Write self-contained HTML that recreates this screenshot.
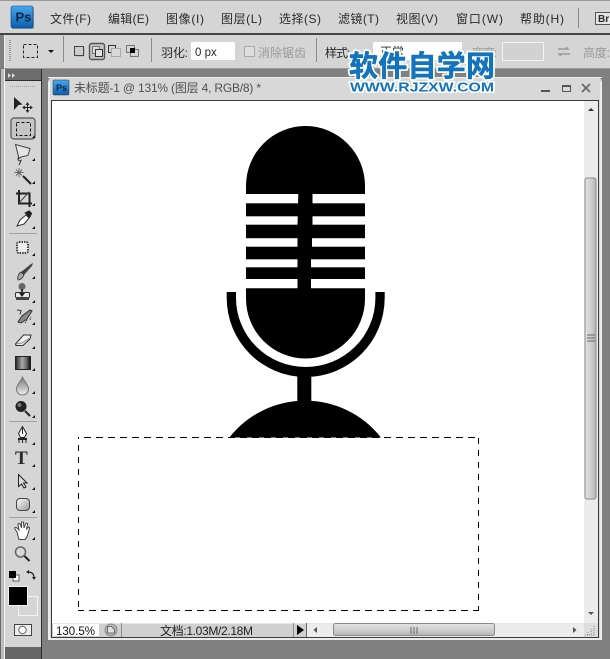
<!DOCTYPE html>
<html><head><meta charset="utf-8"><style>
html,body{margin:0;padding:0;width:610px;height:659px;overflow:hidden;background:#999}
svg{display:block;filter:blur(.3px)}
text{font-family:"Liberation Sans","Noto Sans CJK SC",sans-serif;font-size:12px;fill:#2a2a2a}
.g{fill:#9a9a9a}
.wm{font-family:"Noto Sans CJK SC",sans-serif;font-weight:700;fill:#1474bb;stroke:#fff;paint-order:stroke;stroke-linejoin:round}
.wm2{font-family:"Noto Sans CJK SC",sans-serif;font-weight:700;fill:#1474bb;stroke:#1474bb;stroke-linejoin:round}
</style></head><body>
<svg width="610" height="659" viewBox="0 0 610 659" xmlns="http://www.w3.org/2000/svg">
<defs>
<linearGradient id="ps" x1="0" y1="0" x2="0" y2="1"><stop offset="0" stop-color="#45a8ee"/><stop offset="1" stop-color="#0a5db0"/></linearGradient>
<linearGradient id="grd" x1="0" y1="0" x2="1" y2="0"><stop offset="0" stop-color="#222"/><stop offset=".45" stop-color="#aaa"/><stop offset=".75" stop-color="#666"/><stop offset="1" stop-color="#000"/></linearGradient>
<linearGradient id="shp" x1="0" y1="0" x2="1" y2="1"><stop offset="0" stop-color="#fff"/><stop offset="1" stop-color="#999"/></linearGradient>
<linearGradient id="drop" x1="0" y1="0" x2="0" y2="1"><stop offset="0" stop-color="#777"/><stop offset="1" stop-color="#eee"/></linearGradient>
<linearGradient id="ht" x1="0" y1="0" x2="0" y2="1"><stop offset="0" stop-color="#e2e2e2"/><stop offset=".5" stop-color="#d0d0d0"/><stop offset="1" stop-color="#b4b4b4"/></linearGradient>
<linearGradient id="vt" x1="0" y1="0" x2="1" y2="0"><stop offset="0" stop-color="#e2e2e2"/><stop offset=".5" stop-color="#d0d0d0"/><stop offset="1" stop-color="#b4b4b4"/></linearGradient>
</defs>

<!-- workspace -->
<rect width="610" height="659" fill="#808080"/>

<!-- menu bar -->
<rect width="610" height="33" fill="#d5d5d5"/>
<rect y="0" width="610" height="1" fill="#999"/>
<rect y="33" width="610" height="2" fill="#444"/>
<rect x="12" y="7" width="22" height="22" fill="#9c9c9c"/>
<rect x="11" y="6" width="22" height="22" rx="2" fill="url(#ps)" stroke="#0b3f78" stroke-width=".6"/>
<text x="15.500" y="21.500" style="font-size:13px;font-weight:700;fill:#10243c">Ps</text>
<text x="50" y="23" textLength="41">文件(F)</text>
<text x="108" y="23" textLength="41">编辑(E)</text>
<text x="166" y="23" textLength="38">图像(I)</text>
<text x="221" y="23" textLength="41">图层(L)</text>
<text x="279" y="23" textLength="42">选择(S)</text>
<text x="338" y="23" textLength="41">滤镜(T)</text>
<text x="396" y="23" textLength="42">视图(V)</text>
<text x="456" y="23" textLength="47">窗口(W)</text>
<text x="520" y="23" textLength="44">帮助(H)</text>
<rect x="578" y="8" width="1" height="20" fill="#8a8a8a"/>
<rect x="595.500" y="12.500" width="20" height="12" fill="#e4e4e4" stroke="#555"/>
<text x="598" y="22" style="font-size:10px;font-weight:700">Br</text>

<!-- options bar -->
<rect x="4" y="35" width="606" height="34" fill="#d5d5d5"/>
<rect x="4" y="35" width="1" height="34" fill="#f0f0f0"/>
<rect x="4" y="68" width="606" height="1" fill="#9a9a9a"/>
<path d="M10 40V62" stroke="#999" stroke-width="2" stroke-dasharray="1 1"/>
<rect x="23.500" y="44.500" width="14" height="13" fill="none" stroke="#222" stroke-dasharray="3 2"/>
<path d="M48 50h6l-3 3z" fill="#111"/>
<rect x="63" y="36" width="1" height="26" fill="#8c8c8c"/>
<rect x="75.500" y="47.500" width="9" height="9" fill="#aaa"/>
<rect x="74.500" y="46.500" width="9" height="9" fill="#ccc" stroke="#444"/>
<rect x="89.500" y="43.500" width="15" height="16" rx="2" fill="#c4c4c4" stroke="#555" stroke-width="1.400"/>
<rect x="92.500" y="46.500" width="7" height="7" fill="#ddd" stroke="#777"/>
<rect x="95.500" y="49.500" width="7" height="7" fill="#e0e0e0" stroke="#333"/>
<rect x="108.500" y="45.500" width="7" height="7" fill="#d5d5d5" stroke="#333"/>
<rect x="111.500" y="48.500" width="9" height="8" fill="#d8d8d8" stroke="#aaa"/>
<rect x="126.500" y="45.500" width="8" height="7" fill="#d5d5d5" stroke="#777"/>
<rect x="130.500" y="49.500" width="8" height="7" fill="#d5d5d5" stroke="#777"/>
<rect x="130" y="48" width="5" height="5" fill="#000"/>
<rect x="151" y="38" width="1" height="24" fill="#8c8c8c"/>
<text x="161" y="57" textLength="27">羽化:</text>
<rect x="191" y="42" width="44" height="18" rx="1" fill="#fff"/>
<text x="195" y="56" style="font-size:11.500px">0 px</text>
<rect x="244.500" y="46.500" width="10" height="10" fill="#dedede" stroke="#aaa"/>
<text class="g" x="258" y="57" textLength="48">消除锯齿</text>
<rect x="316" y="38" width="1" height="24" fill="#8c8c8c"/>
<text x="325" y="57" textLength="25">样式:</text>
<rect x="373" y="42" width="89" height="18" rx="1" fill="#fff"/>
<text x="380" y="56">正常</text>
<path d="M452 53h6l-3 4z" fill="#111"/>
<text class="g" x="472" y="57" textLength="25">宽度:</text>
<rect x="502.500" y="42.500" width="41" height="18" rx="1" fill="#d2d2d2" stroke="#f4f4f4"/>
<path d="M558 49h10l-2-2M570 54h-11l2 2" fill="none" stroke="#999" stroke-width="1.400"/>
<text class="g" x="583" y="57" textLength="27">高度:</text>

<!-- left edge + toolbar -->
<rect x="0" y="69" width="1" height="590" fill="#6a6a6a"/>
<rect x="1" y="69" width="3" height="590" fill="#bdbdbd"/>
<rect x="4" y="69" width="1" height="590" fill="#f2f2f2"/>
<rect x="5" y="69" width="36" height="11" fill="#6c6c6c"/>
<path d="M8 73l3 2.500-3 2.500zM12 73l3 2.500-3 2.500z" fill="#ddd"/>
<rect x="5" y="80" width="36" height="1" fill="#2e2e2e"/>
<rect x="5" y="81" width="36" height="566" fill="#d5d5d5"/>
<rect x="5" y="647" width="36" height="12" fill="#666"/>
<rect x="41" y="69" width="1" height="590" fill="#2e2e2e"/>
<path d="M10 86.500H36" stroke="#a0a0a0" stroke-dasharray="1 1"/>

<!-- move -->
<path d="M14 97l8.500 7.500-4 .5-4.500 5z" fill="#222"/>
<path d="M27.500 103.500v8M23.500 107.500h8M26 105l1.500-2 1.500 2M26 110l1.500 2 1.500-2M25 106l-2 1.500 2 1.500M30 106l2 1.500-2 1.500" fill="none" stroke="#222"/>
<!-- marquee -->
<rect x="11" y="118" width="24" height="21" rx="3" fill="#c6c6c6" stroke="#555" stroke-width="1.200"/>
<rect x="16.500" y="122.500" width="14" height="13" fill="none" stroke="#111" stroke-dasharray="3 2"/>
<!-- lasso -->
<path d="M15.500 144.500l14.500 4-2 7-7 1.500-2 1.500z" fill="#e4e4e4" stroke="#444"/>
<path d="M19 157a2 2 0 1 0 2 3.500l-2 4.500" fill="none" stroke="#333"/>
<!-- wand -->
<path d="M19 168v9M14.500 172.500h9M16 169.500l6 6M22 169.500l-6 6" stroke="#666" stroke-width=".9"/>
<path d="M23 176l8 8" stroke="#222" stroke-width="2"/>
<!-- crop -->
<path d="M19 190V203.500H32M16 193.500H29.500V207" fill="none" stroke="#222" stroke-width="2"/>
<path d="M19 203l10-11" stroke="#444"/>
<!-- dropper -->
<path d="M17 226l3-6 6-5 3 3-5 6z" fill="#fff" stroke="#333"/>
<path d="M26 213l3-1.500 2 2-1.500 3z" fill="#222" stroke="#222" stroke-width="2"/>
<rect x="9" y="233" width="28" height="1" fill="#a2a2a2"/>
<!-- heal -->
<rect x="17" y="242" width="11" height="11" rx="2" fill="#eee" stroke="#444" stroke-width="2" stroke-dasharray="1.500 1"/>
<!-- brush -->
<path d="M21 272l10-8 2-1-1 3-8 9z" fill="#444"/>
<path d="M18 280c-1-3 1-7 3-8l3 3c-1 3-4 5-6 5z" fill="#aaa" stroke="#333" stroke-width=".8"/>
<!-- stamp -->
<circle cx="22" cy="286.500" r="3.500" fill="#666"/>
<path d="M21 289h2v3h-2z" fill="#333"/>
<rect x="15.500" y="292.500" width="14" height="5" rx="1" fill="#e8e8e8" stroke="#333"/>
<rect x="16" y="297" width="13" height="3" fill="#444"/>
<path d="M19 293h6l-3 4z" fill="#222"/>
<!-- history -->
<path d="M18 322l4-6 8-6 2 1-5 8-6 4z" fill="#888" stroke="#333"/>
<path d="M25 323l2-3M30 320l1-3" stroke="#333" stroke-dasharray="1.500 1"/>
<path d="M17 310l4 .5-1 4" fill="none" stroke="#333"/>
<!-- eraser -->
<path d="M15.500 344l8-9H31l-1 4-7 6.500H16z" fill="#f0f0f0" stroke="#333"/>
<path d="M16 344l6-1 8-5" fill="none" stroke="#888"/>
<!-- gradient -->
<rect x="15.500" y="356.500" width="15" height="13" fill="url(#grd)" stroke="#222"/>
<!-- blur -->
<path d="M22.500 377c2 5 6 8 6 12a6 6 0 0 1-12 0c0-4 4-7 6-12z" fill="url(#drop)" stroke="#777"/>
<!-- dodge -->
<circle cx="21" cy="406.500" r="5.500" fill="#222"/>
<circle cx="19.500" cy="405" r="2" fill="#777"/>
<path d="M25 411l5 5" stroke="#222" stroke-width="2"/>
<rect x="9" y="421" width="28" height="1" fill="#a2a2a2"/>
<!-- pen -->
<path d="M22.500 426.500l4 7-2 4h-4l-2-4z" fill="#fff" stroke="#222"/>
<path d="M22.500 428v6" stroke="#222"/>
<rect x="18" y="438" width="9" height="2" fill="#222"/>
<path d="M19 440v3M22.500 440v3M26 440v3" stroke="#222"/>
<!-- T -->
<text x="15" y="464" style="font-family:'Liberation Serif',serif;font-size:19px;font-weight:700;fill:#2a2a2a">T</text>
<!-- path select -->
<path d="M18.500 474.500v12l3-2.500 2.500 4 2-1-2.500-4h3.500z" fill="#ddd" stroke="#222"/>
<!-- shape -->
<rect x="16.500" y="498.500" width="13" height="12" rx="3.500" fill="url(#shp)" stroke="#444"/>
<rect x="9" y="517" width="28" height="1" fill="#a2a2a2"/>
<!-- hand -->
<path d="M17 532l-2-3c-1-2 1-2 2-1l2 2-1-5c0-2 2-2 2.500 0l1 3v-5c0-1.500 2-1.500 2 0l.5 5 1.500-4c.8-1.500 2.200-1 2 .5l-1 5 1.500-2c1-1 2 0 1.500 1l-1.500 5c-.5 3-2 5-3 6h-6z" fill="#fff" stroke="#444"/>
<!-- zoom -->
<circle cx="20.500" cy="552" r="5" fill="#d8d8d8" stroke="#666" stroke-width="1.500"/>
<path d="M24.500 556l5 5" stroke="#222" stroke-width="2"/>
<!-- default colors -->
<rect x="13" y="575" width="6" height="6" fill="#fff" stroke="#222" stroke-width=".7"/>
<rect x="9" y="571" width="7" height="7" fill="#000"/>
<path d="M28 572c4 0 6 2 6 6" fill="none" stroke="#222" stroke-width="1.200"/>
<path d="M26 572l3-2v4zM34 580l-2-3h4z" fill="#222"/>
<!-- fg / bg -->
<rect x="18.500" y="596.500" width="19" height="19" fill="#d5d5d5" stroke="#f2f2f2"/>
<rect x="8.500" y="586.500" width="19" height="19" fill="#000" stroke="#f2f2f2"/>
<!-- quick mask -->
<rect x="14.500" y="624.500" width="17" height="11" fill="#eee" stroke="#444"/>
<circle cx="22.500" cy="630" r="3.700" fill="#fff" stroke="#666"/>
<!-- tool corner flags -->
<path fill="#111" d="M35 135v3h-3zM35 158v3h-3zM35 181v3h-3zM35 203v3h-3zM35 226v3h-3zM35 253v3h-3zM35 276v3h-3zM35 300v3h-3zM35 322v3h-3zM35 346v3h-3zM35 368v3h-3zM35 391v3h-3zM35 415v3h-3zM35 442v3h-3zM35 464v3h-3zM35 487v3h-3zM35 510v3h-3zM35 537v3h-3z"/>

<!-- document window -->
<path d="M48 640V82a5 5 0 0 1 5-5H597a5 5 0 0 1 5 5V640z" fill="#d8d8d8"/>
<rect x="48" y="77" width="554" height="1" fill="#efefef"/>
<rect x="48" y="638" width="554" height="2" fill="#ececec"/>
<rect x="600" y="82" width="2" height="558" fill="#ececec"/>
<rect x="48" y="82" width="2" height="558" fill="#ececec"/>
<rect x="53" y="80" width="16" height="15" rx="1" fill="url(#ps)" stroke="#333" stroke-width=".5"/>
<text x="56" y="91" style="font-size:9px;font-weight:700;fill:#10243c">Ps</text>
<text x="74" y="92" textLength="187" style="fill:#505050">未标题-1 @ 131% (图层 4, RGB/8) *</text>
<rect x="541" y="90" width="9" height="2" fill="#555"/>
<rect x="562.500" y="85.500" width="8" height="6" fill="none" stroke="#555"/>
<rect x="562" y="85" width="9" height="2" fill="#555"/>
<path d="M582 84l8 8M590 84l-8 8" stroke="#666" stroke-width="1.600"/>
<!-- inner frame -->
<rect x="51.500" y="100.500" width="547" height="537" fill="#fff" stroke="#3a3a3a"/>

<!-- microphone -->
<g fill="#000">
<path d="M246 194V186a59.500 60 0 0 1 119 0V194z"/>
<path d="M298.300 193H312.500V225H312V259H311V289H297.500V225H297.500z"/>
<rect x="246" y="203.300" width="119" height="13"/>
<rect x="246" y="224.700" width="119" height="13.500"/>
<rect x="246" y="246.700" width="119" height="12.600"/>
<rect x="246" y="267.300" width="119" height="11.700"/>
<path d="M246 288.300H365V298.500a59.500 60 0 0 1-119 0z"/>
<path d="M226.700 292H236V298a69.700 69 0 0 0 139.400 0V292H384.700V298a79 79 0 0 1-158 0z"/>
<rect x="297.300" y="374" width="14" height="30"/>
<path d="M229.300 437.500A96.500 96.500 0 0 1 381 437.500z"/>
</g>
<!-- marquee selection -->
<g fill="none" stroke="#000">
<path d="M78 437.500H479" stroke-dasharray="7 5" stroke-dashoffset="6"/>
<path d="M78 610.500H479" stroke-dasharray="7 5" stroke-dashoffset="1"/>
<path d="M78.500 437V611" stroke-dasharray="6 6" stroke-dashoffset="4"/>
<path d="M478.500 437V611" stroke-dasharray="6 6" stroke-dashoffset="11"/>
</g>

<!-- v scrollbar -->
<rect x="584" y="101" width="14" height="522" fill="#ececec"/>
<path d="M588 111l3-3 3 3z" fill="#333"/>
<rect x="585" y="178" width="11" height="321" rx="2" fill="url(#vt)" stroke="#8c8c8c"/>
<path d="M587 335h8M587 338h8M587 341h8" stroke="#666"/>
<path d="M588 612h6l-3 3z" fill="#555"/>

<!-- status bar -->
<rect x="52" y="623" width="256" height="14" fill="#d0d0d0"/>
<rect x="52" y="623" width="546" height="1" fill="#e6e6e6"/>
<rect x="53" y="624" width="46" height="12" fill="#fff"/>
<text x="56" y="635" textLength="39" style="fill:#111;font-size:11.500px">130.5%</text>
<circle cx="111" cy="630" r="6" fill="#b4b4b4" stroke="#8c8c8c"/>
<path d="M107.500 626.500h4l3 3v3.500h-7z" fill="#ddd" stroke="#555" stroke-width=".8"/>
<rect x="121" y="623" width="1" height="14" fill="#8c8c8c"/>
<text x="160" y="635" textLength="93" style="fill:#222">文档:1.03M/2.18M</text>
<rect x="293" y="623" width="1" height="14" fill="#8c8c8c"/>
<path d="M297 625l7 5-7 5z" fill="#000"/>
<rect x="306" y="623" width="1" height="14" fill="#666"/>
<!-- h scrollbar -->
<rect x="307" y="624" width="291" height="13" fill="#ececec"/>
<path d="M317 627l-3.500 3 3.500 3z" fill="#555"/>
<rect x="333.500" y="623.500" width="161" height="12" rx="2" fill="url(#ht)" stroke="#8c8c8c"/>
<path d="M411 627v7M414 627v7M417 627v7" stroke="#666"/>
<path d="M573 627l3.500 3-3.500 3z" fill="#555"/>
<rect x="584" y="623" width="14" height="14" fill="#dedede"/>
<path d="M594 626v9M591 629v6M588 632v3M585 635h10" stroke="#888" stroke-dasharray="1 1"/>

<!-- watermark -->
<text class="wm" x="349" y="76" textLength="146" style="font-size:29px;stroke-width:4px">软件自学网</text>
<text class="wm2" x="349" y="76" textLength="146" style="font-size:29px;stroke-width:.6px">软件自学网</text>
<text class="wm" x="350" y="91.500" textLength="144" lengthAdjust="spacingAndGlyphs" style="font-family:'Liberation Sans',sans-serif;font-size:13px;stroke-width:3px">WWW.RJZXW.COM</text>
</svg>
</body></html>
